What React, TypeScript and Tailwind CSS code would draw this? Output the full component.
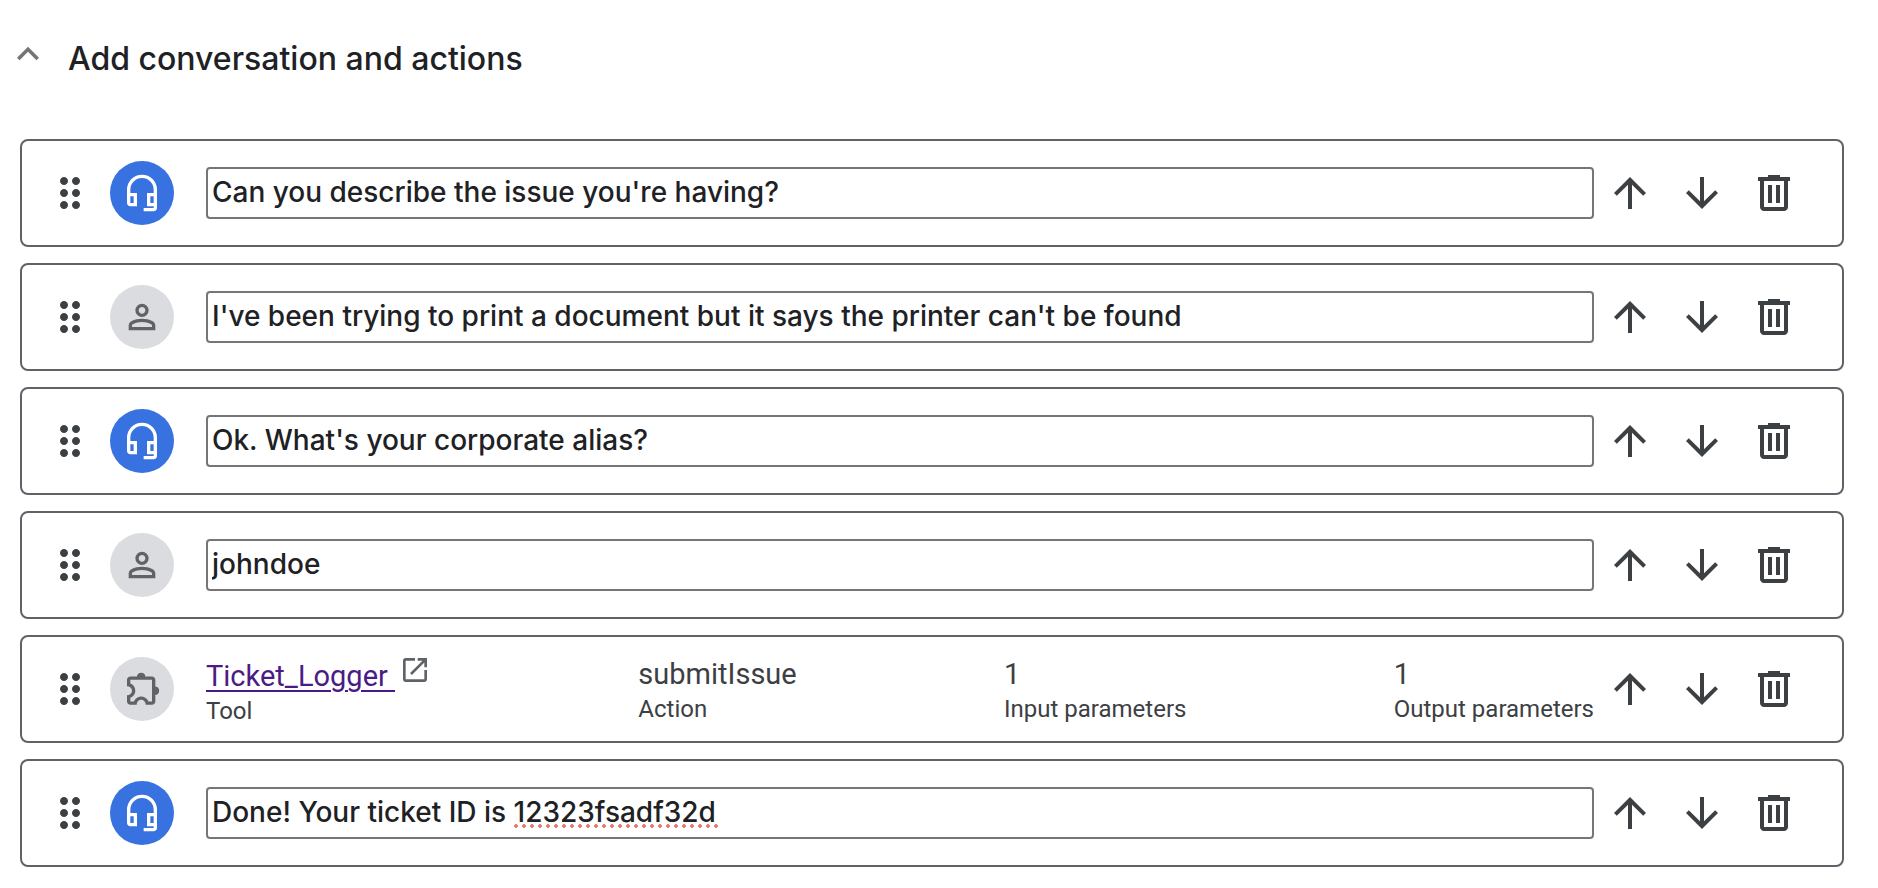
import { useState } from "react";

type Speaker = "agent" | "user";

interface Message {
  kind: "message";
  speaker: Speaker;
  text: string;
  misspelled?: boolean;
}

interface ToolCall {
  kind: "tool";
  name: string;
  details: { value: string; label: string }[];
}

type Step = Message | ToolCall;

const steps: Step[] = [
  { kind: "message", speaker: "agent", text: "Can you describe the issue you're having?" },
  { kind: "message", speaker: "user", text: "I've been trying to print a document but it says the printer can't be found" },
  { kind: "message", speaker: "agent", text: "Ok. What's your corporate alias?" },
  { kind: "message", speaker: "user", text: "johndoe" },
  {
    kind: "tool",
    name: "Ticket_Logger",
    details: [
      { value: "submitIssue", label: "Action" },
      { value: "1", label: "Input parameters" },
      { value: "1", label: "Output parameters" },
    ],
  },
  { kind: "message", speaker: "agent", text: "Done! Your ticket ID is 12323fsadf32d", misspelled: true },
];

const paths = {
  chevron: "M7.4 15.4 6 14l6-6 6 6-1.4 1.4-4.6-4.6Z",
  drag: "M9 20q-.825 0-1.412-.587Q7 18.825 7 18q0-.825.588-1.413Q8.175 16 9 16q.825 0 1.413.587Q11 17.175 11 18q0 .825-.587 1.413Q9.825 20 9 20Zm6 0q-.825 0-1.412-.587Q13 18.825 13 18q0-.825.588-1.413Q14.175 16 15 16q.825 0 1.413.587Q17 17.175 17 18q0 .825-.587 1.413Q15.825 20 15 20Zm-6-6q-.825 0-1.412-.588Q7 12.825 7 12t.588-1.412Q8.175 10 9 10q.825 0 1.413.588Q11 11.175 11 12t-.587 1.412Q9.825 14 9 14Zm6 0q-.825 0-1.412-.588Q13 12.825 13 12t.588-1.412Q14.175 10 15 10q.825 0 1.413.588Q17 11.175 17 12t-.587 1.412Q15.825 14 15 14ZM9 8q-.825 0-1.412-.588Q7 6.825 7 6t.588-1.412Q8.175 4 9 4q.825 0 1.413.588Q11 5.175 11 6t-.587 1.412Q9.825 8 9 8Zm6 0q-.825 0-1.412-.588Q13 6.825 13 6t.588-1.412Q14.175 4 15 4q.825 0 1.413.588Q17 5.175 17 6t-.587 1.412Q15.825 8 15 8Z",
  headset: "M13 23v-2h6v-1h-4v-8h4v-2q0-2.9-2.05-4.95T12 3Q9.1 3 7.05 5.05T5 10v2h4v8H5q-.825 0-1.412-.587Q3 18.825 3 18v-8q0-1.85.713-3.487.712-1.638 1.937-2.863t2.863-1.937Q10.15 1 12 1q1.85 0 3.488.713 1.637.712 2.862 1.937t1.938 2.863Q21 8.15 21 10v11q0 .825-.587 1.413Q19.825 23 19 23ZM5 18h2v-4H5Zm12 0h2v-4h-2Z",
  person: "M12 12q-1.65 0-2.825-1.175Q8 9.65 8 8t1.175-2.825Q10.35 4 12 4t2.825 1.175Q16 6.35 16 8t-1.175 2.825Q13.65 12 12 12Zm-8 8v-2.8q0-.85.438-1.563.437-.712 1.162-1.087 1.55-.775 3.15-1.163Q10.35 13 12 13t3.25.387q1.6.388 3.15 1.163.725.375 1.162 1.087Q20 16.35 20 17.2V20Zm2-2h12v-.8q0-.275-.137-.5-.138-.225-.363-.35-1.35-.675-2.725-1.013Q13.4 15 12 15t-2.775.337Q7.85 15.675 6.5 16.35q-.225.125-.362.35-.138.225-.138.5Zm6-8q.825 0 1.413-.588Q14 8.825 14 8t-.587-1.412Q12.825 6 12 6q-.825 0-1.412.588Q10 7.175 10 8t.588 1.412Q11.175 10 12 10Z",
  extension: "M8.8 21.5H5q-.825 0-1.413-.587Q3 20.325 3 19.5v-3.8q1.2 0 2.1-.763.9-.762.9-1.937 0-1.175-.9-1.938-.9-.762-2.1-.762V6.5q0-.825.587-1.413Q4.175 4.5 5 4.5h4q0-1.05.725-1.625Q10.45 2.3 11.5 2.3q1.05 0 1.775.575Q14 3.45 14 4.5h4q.825 0 1.413.587Q20 5.675 20 6.5v4q1.05 0 1.675.725.625.725.625 1.775 0 1.05-.625 1.775Q21.05 15.5 20 15.5v4q0 .825-.587 1.413-.588.587-1.413.587h-3.8q0-1.25-.787-2.125-.788-.875-1.913-.875t-1.912.875Q8.8 20.25 8.8 21.5ZM5 19.5h2.125q.6-1.65 1.925-2.325 1.325-.675 2.45-.675t2.45.675q1.325.675 1.925 2.325H18v-13H5v2.2q1.35.5 2.175 1.675Q8 11.55 8 13q0 1.425-.825 2.6T5 17.3Z",
  openInNew: "M5 21q-.825 0-1.413-.587Q3 19.825 3 19V5q0-.825.587-1.413Q4.175 3 5 3h7v2H5v14h14v-7h2v7q0 .825-.587 1.413Q19.825 21 19 21Zm4.7-5.3-1.4-1.4L17.6 5H14V3h7v7h-2V6.4Z",
  up: "M11 20V7.825l-5.6 5.6L4 12l8-8 8 8-1.4 1.425-5.6-5.6V20Z",
  down: "M11 4v12.175l-5.6-5.6L4 12l8 8 8-8-1.4-1.425-5.6 5.6V4Z",
  trash: "M7 21q-.825 0-1.412-.587Q5 19.825 5 19V6H4V4h5V3h6v1h5v2h-1v13q0 .825-.587 1.413Q17.825 21 17 21ZM17 6H7v13h10ZM9 17h2V8H9Zm4 0h2V8h-2Z",
};

function Icon({ name, className }: { name: keyof typeof paths; className: string }) {
  return (
    <svg viewBox="0 0 24 24" fill="currentColor" aria-hidden="true" className={className}>
      <path d={paths[name]} />
    </svg>
  );
}

function Avatar({ step }: { step: Step }) {
  if (step.kind === "message" && step.speaker === "agent") {
    return (
      <div className="flex size-16 shrink-0 items-center justify-center rounded-full bg-[#3871e0] text-white">
        <Icon name="headset" className="size-10" />
      </div>
    );
  }
  return (
    <div className="flex size-16 shrink-0 items-center justify-center rounded-full bg-[#dadce0] text-[#5f6368]">
      <Icon name={step.kind === "tool" ? "extension" : "person"} className="size-10" />
    </div>
  );
}

function MessageField({ message, index }: { message: Message; index: number }) {
  const [text, setText] = useState(message.text);
  return (
    <div className="relative min-w-0 flex-1">
      <input
        type="text"
        aria-label={`Step ${index + 1} message`}
        spellCheck={false}
        value={text}
        onChange={(event) => setText(event.target.value)}
        className="block h-[52px] w-full rounded border-2 border-[#767676] bg-white px-1 pb-[2px] font-['Inter',sans-serif] text-[28px] font-medium text-[#202124]"
      />
      {message.misspelled && text === message.text && (
        <span
          aria-hidden="true"
          className="absolute bottom-[11px] left-[308px] h-1 w-[204px] bg-[radial-gradient(circle_at_2px_2px,#e67c73_2px,transparent_2px)] bg-[length:8px_4px]"
        />
      )}
    </div>
  );
}

function ToolSummary({ tool }: { tool: ToolCall }) {
  return (
    <div className="flex min-w-0 flex-1 items-center justify-between pt-1 text-[#3c4043]">
      <div className="pt-1">
        <div className="flex gap-1 text-[29px] leading-9">
          <a href="#tool" className="whitespace-pre text-[#4b1a86] underline decoration-2 underline-offset-4">
            {tool.name + " "}
          </a>
          <Icon name="openInNew" className="-mt-1 size-8 text-[#5f6368]" />
        </div>
        <div className="text-2xl leading-[34px]">Tool</div>
      </div>
      {tool.details.map((detail) => (
        <div key={detail.label}>
          <div className="text-[29px] leading-9">{detail.value}</div>
          <div className="text-2xl leading-[34px]">{detail.label}</div>
        </div>
      ))}
    </div>
  );
}

function Actions() {
  return (
    <div className="flex shrink-0 text-[#3c4043]">
      <button type="button" aria-label="Move up" className="flex size-18 items-center justify-center">
        <Icon name="up" className="size-12" />
      </button>
      <button type="button" aria-label="Move down" className="flex size-18 items-center justify-center">
        <Icon name="down" className="size-12" />
      </button>
      <button type="button" aria-label="Delete" className="flex size-18 items-center justify-center">
        <Icon name="trash" className="size-12" />
      </button>
    </div>
  );
}

export default function App() {
  const [open, setOpen] = useState(true);
  return (
    <main className="min-h-screen bg-white pt-8 font-['Roboto',sans-serif]">
      <h2 className="font-['Inter',sans-serif] text-[32px] leading-[54px] font-medium text-[#202124]">
        <button
          type="button"
          aria-expanded={open}
          onClick={() => setOpen(!open)}
          className="ml-[6px] flex items-start gap-[18px]"
        >
          <Icon name="chevron" className="size-11 text-[#757575]" />
          Add conversation and actions
        </button>
      </h2>
      {open && (
        <ol className="mt-[53px] mr-[34px] ml-5 flex flex-col gap-4">
          {steps.map((step, index) => (
            <li
              key={index}
              className="flex h-27 items-center rounded-lg border-2 border-[#5f6368] pr-8 pl-6"
            >
              <Icon name="drag" className="mr-4 size-12 shrink-0 text-[#3c4043]" />
              <div className="mr-8">
                <Avatar step={step} />
              </div>
              {step.kind === "message" ? (
                <MessageField message={step} index={index} />
              ) : (
                <ToolSummary tool={step} />
              )}
              <Actions />
            </li>
          ))}
        </ol>
      )}
    </main>
  );
}
